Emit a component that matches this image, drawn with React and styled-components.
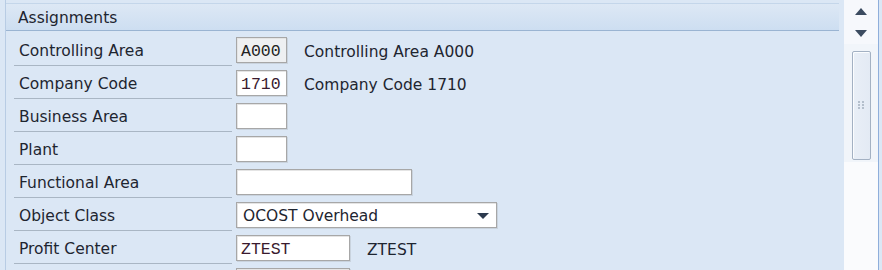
import React from 'react'
import styled, { createGlobalStyle } from 'styled-components'

const GlobalStyle = createGlobalStyle`
  html, body {
    margin: 0;
    padding: 0;
    background: #dbe7f5;
    overflow: hidden;
  }
  body {
    font-family: "DejaVu Sans", sans-serif;
    font-size: 15.5px;
    color: #1e2530;
  }
`;

const Screen = styled.div`
  display: flex;
  width: 882px;
  height: 270px;
  overflow: hidden;
  background: #dbe7f5;
`;

const Panel = styled.div`
  width: 833px;
  margin-left: 5px;
  border-left: 1px solid #b8cce4;
  padding-top: 3px;
`;

const Header = styled.div`
  height: 28px;
  box-sizing: border-box;
  border-top: 1px solid #c4d6ea;
  border-bottom: 1px solid #9ab4d2;
  background: linear-gradient(#dde8f5, #cddef1);
  display: flex;
  align-items: center;
  padding-left: 12px;
  padding-top: 1px;
  margin-bottom: 2px;
`;

const Row = styled.div`
  display: flex;
  align-items: center;
  height: 33px;
`;

const Label = styled.div`
  width: 213px;
  height: 28px;
  margin-left: 8px;
  padding-left: 5px;
  padding-top: 4px;
  border-bottom: 1px solid #a9b6c4;
  display: flex;
  align-items: center;
  white-space: nowrap;
`;

const Field = styled.div`
  margin-left: 4px;
  margin-top: 1px;
  width: ${p => p.w}px;
  height: 26px;
  box-sizing: border-box;
  border: 1px solid #a7a7a7;
  box-shadow: inset 1px 1px 0 #e4e4e4, 1px 1px 0 #c9d3de;
  background: ${p => (p.readOnly ? '#eef0f2' : '#ffffff')};
  display: flex;
  align-items: center;
  padding-left: 4px;
  padding-top: 2px;
  font-family: "Liberation Mono", monospace;
  font-size: 16.5px;
  color: ${p => (p.readOnly ? '#222' : '#3a1a2e')};
`;

const Select = styled(Field)`
  font-family: inherit;
  font-size: 15.5px;
  color: #1e2530;
  padding-left: 6px;
  padding-right: 7px;
  justify-content: space-between;
`;

const Caret = styled.span`
  width: 0;
  height: 0;
  border-left: 6px solid transparent;
  border-right: 6px solid transparent;
  border-top: 6px solid #2c3a4e;
`;

const Desc = styled.span`
  margin-left: 17px;
  padding-top: 4px;
  white-space: nowrap;
`;

const Scrollbar = styled.div`
  margin-left: 5px;
  width: 34px;
  border-right: 1px solid #8eaedb;
  background: #f1f5fa;
  display: flex;
  flex-direction: column;
  align-items: center;
`;

const ArrowBtn = styled.div`
  height: 22px;
  width: 100%;
  display: flex;
  align-items: center;
  justify-content: center;
  background: #f6f8fc;
`;

const Arrow = styled.span`
  width: 0;
  height: 0;
  border-left: 6px solid transparent;
  border-right: 6px solid transparent;
  ${p => (p.up ? 'border-bottom: 7px solid #3b4b60;' : 'border-top: 7px solid #3b4b60;')}
`;

const Thumb = styled.div`
  margin-top: 7px;
  width: 19px;
  height: 109px;
  box-sizing: border-box;
  border: 1px solid #a3b1c3;
  border-radius: 2px;
  background: linear-gradient(90deg, #e9eff7, #e3eaf4);
  box-shadow: inset 1px 1px 0 #fbfdff;
  display: flex;
  align-items: center;
  justify-content: center;
`;

const Track = styled.div`
  flex: 1;
  width: 100%;
  background: #fafbfd;
  margin-top: 2px;
`;

const rows = [
  { id: 1, label: 'Controlling Area', value: 'A000', w: 51, readOnly: true, desc: 'Controlling Area A000' },
  { id: 2, label: 'Company Code', value: '1710', w: 51, desc: 'Company Code 1710' },
  { id: 3, label: 'Business Area', value: '', w: 51 },
  { id: 4, label: 'Plant', value: '', w: 51 },
  { id: 5, label: 'Functional Area', value: '', w: 176 },
  { id: 6, label: 'Object Class', value: 'OCOST Overhead', w: 261, select: true },
  { id: 7, label: 'Profit Center', value: 'ZTEST', w: 114, desc: 'ZTEST' },
  { id: 8, label: '', value: '', w: 114 },
];

const Grip = () => (
  <svg width="7" height="9" viewBox="0 0 7 9">
    {[0, 3, 6].map(y =>
      [0, 4].map(x => <rect key={`${x}-${y}`} x={x} y={y} width="2" height="2" fill="#b4bfcc" />)
    )}
  </svg>
);

export default function App() {
  return (
    <>
      <GlobalStyle />
      <Screen>
        <Panel>
          <Header>Assignments</Header>
          {rows.map(r => (
            <Row key={r.id}>
              <Label>{r.label}</Label>
              {r.select ? (
                <Select w={r.w}>
                  {r.value}
                  <Caret />
                </Select>
              ) : (
                <Field w={r.w} readOnly={r.readOnly}>{r.value}</Field>
              )}
              {r.desc && <Desc>{r.desc}</Desc>}
            </Row>
          ))}
        </Panel>
        <Scrollbar>
          <ArrowBtn><Arrow up /></ArrowBtn>
          <ArrowBtn><Arrow /></ArrowBtn>
          <Thumb><Grip /></Thumb>
          <Track />
        </Scrollbar>
      </Screen>
    </>
  );
}
